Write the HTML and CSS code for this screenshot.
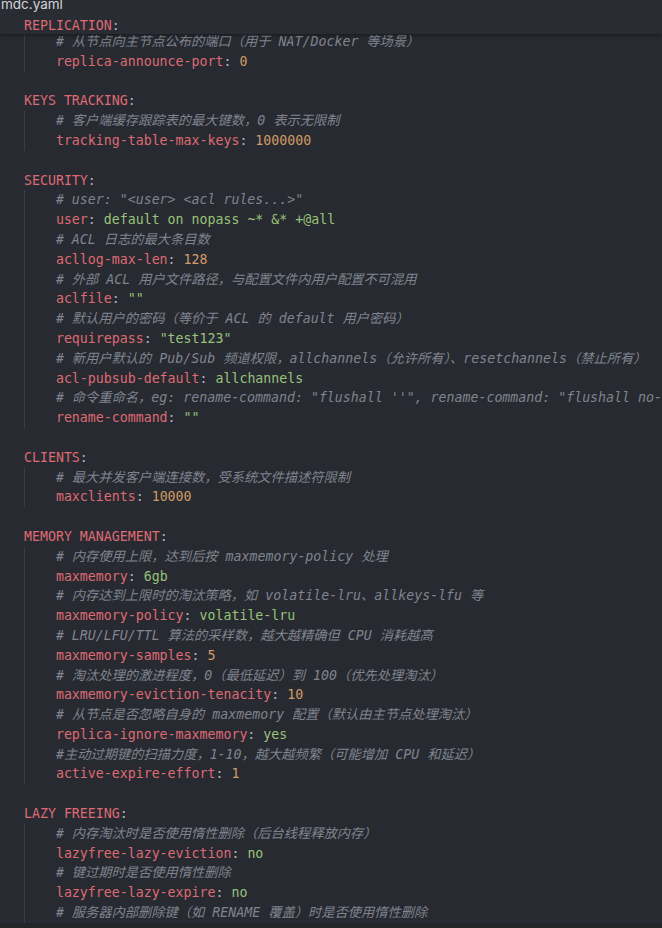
FILE: index.html
```html
<!DOCTYPE html>
<html lang="zh-CN">
<head>
<meta charset="utf-8">
<title>mdc.yaml</title>
<link rel="stylesheet" href="styles.css">
</head>
<body>
<div class="editor">
  <div class="hdr">
    <div class="fname">mdc.yaml</div>
    <div class="ln top"><span class="k">REPLICATION</span><span class="p">:</span></div>
  </div>
  <div class="code">
    <div class="body">
      <div class="ln"><span class="c"># 从节点向主节点公布的端口（用于 NAT/Docker 等场景）</span></div>
      <div class="ln"><span class="k">replica-announce-port</span><span class="p">: </span><span class="n">0</span></div>
    </div>
    <div class="ln"></div>

    <div class="ln"><span class="k">KEYS TRACKING</span><span class="p">:</span></div>
    <div class="body">
      <div class="ln"><span class="c"># 客户端缓存跟踪表的最大键数，0 表示无限制</span></div>
      <div class="ln"><span class="k">tracking-table-max-keys</span><span class="p">: </span><span class="n">1000000</span></div>
    </div>
    <div class="ln"></div>

    <div class="ln"><span class="k">SECURITY</span><span class="p">:</span></div>
    <div class="body">
      <div class="ln"><span class="c"># user: "&lt;user&gt; &lt;acl rules...&gt;"</span></div>
      <div class="ln"><span class="k">user</span><span class="p">: </span><span class="s">default on nopass ~* &amp;* +@all</span></div>
      <div class="ln"><span class="c"># ACL 日志的最大条目数</span></div>
      <div class="ln"><span class="k">acllog-max-len</span><span class="p">: </span><span class="n">128</span></div>
      <div class="ln"><span class="c"># 外部 ACL 用户文件路径，与配置文件内用户配置不可混用</span></div>
      <div class="ln"><span class="k">aclfile</span><span class="p">: </span><span class="s">""</span></div>
      <div class="ln"><span class="c"># 默认用户的密码（等价于 ACL 的 default 用户密码）</span></div>
      <div class="ln"><span class="k">requirepass</span><span class="p">: </span><span class="s">"test123"</span></div>
      <div class="ln"><span class="c"># 新用户默认的 Pub/Sub 频道权限，allchannels（允许所有）、resetchannels（禁止所有）</span></div>
      <div class="ln"><span class="k">acl-pubsub-default</span><span class="p">: </span><span class="s">allchannels</span></div>
      <div class="ln"><span class="c"># 命令重命名，eg: rename-command: "flushall ''", rename-command: "flushall no-op"</span></div>
      <div class="ln"><span class="k">rename-command</span><span class="p">: </span><span class="s">""</span></div>
    </div>
    <div class="ln"></div>

    <div class="ln"><span class="k">CLIENTS</span><span class="p">:</span></div>
    <div class="body">
      <div class="ln"><span class="c"># 最大并发客户端连接数，受系统文件描述符限制</span></div>
      <div class="ln"><span class="k">maxclients</span><span class="p">: </span><span class="n">10000</span></div>
    </div>
    <div class="ln"></div>

    <div class="ln"><span class="k">MEMORY MANAGEMENT</span><span class="p">:</span></div>
    <div class="body">
      <div class="ln"><span class="c"># 内存使用上限，达到后按 maxmemory-policy 处理</span></div>
      <div class="ln"><span class="k">maxmemory</span><span class="p">: </span><span class="s">6gb</span></div>
      <div class="ln"><span class="c"># 内存达到上限时的淘汰策略，如 volatile-lru、allkeys-lfu 等</span></div>
      <div class="ln"><span class="k">maxmemory-policy</span><span class="p">: </span><span class="s">volatile-lru</span></div>
      <div class="ln"><span class="c"># LRU/LFU/TTL 算法的采样数，越大越精确但 CPU 消耗越高</span></div>
      <div class="ln"><span class="k">maxmemory-samples</span><span class="p">: </span><span class="n">5</span></div>
      <div class="ln"><span class="c"># 淘汰处理的激进程度，0（最低延迟）到 100（优先处理淘汰）</span></div>
      <div class="ln"><span class="k">maxmemory-eviction-tenacity</span><span class="p">: </span><span class="n">10</span></div>
      <div class="ln"><span class="c"># 从节点是否忽略自身的 maxmemory 配置（默认由主节点处理淘汰）</span></div>
      <div class="ln"><span class="k">replica-ignore-maxmemory</span><span class="p">: </span><span class="s">yes</span></div>
      <div class="ln"><span class="c">#主动过期键的扫描力度，1-10，越大越频繁（可能增加 CPU 和延迟）</span></div>
      <div class="ln"><span class="k">active-expire-effort</span><span class="p">: </span><span class="n">1</span></div>
    </div>
    <div class="ln"></div>

    <div class="ln"><span class="k">LAZY FREEING</span><span class="p">:</span></div>
    <div class="body">
      <div class="ln"><span class="c"># 内存淘汰时是否使用惰性删除（后台线程释放内存）</span></div>
      <div class="ln"><span class="k">lazyfree-lazy-eviction</span><span class="p">: </span><span class="s">no</span></div>
      <div class="ln"><span class="c"># 键过期时是否使用惰性删除</span></div>
      <div class="ln"><span class="k">lazyfree-lazy-expire</span><span class="p">: </span><span class="s">no</span></div>
      <div class="ln"><span class="c"># 服务器内部删除键（如 RENAME 覆盖）时是否使用惰性删除</span></div>
      <div class="ln"><span class="k">lazyfree-lazy-server-del</span><span class="p">: </span><span class="s">no</span></div>
    </div>
  </div>
</div>
<div class="hscroll"></div>
</body>
</html>
```
FILE: styles.css
```css
html, body {
  margin: 0;
  padding: 0;
  height: 928px;
  background: #282a31;
  overflow: hidden;
}
body {
  display: flex;
  flex-direction: column;
}
.editor {
  position: relative;
  flex: 1;
  overflow: hidden;
  font-family: "DejaVu Sans Mono", "Noto Sans CJK SC", monospace;
  font-size: 13.25px;
  color: #abb2bf;
}
.hdr {
  position: absolute;
  top: 0;
  left: 0;
  right: 0;
  height: 34px;
  overflow: hidden;
  background: #2a2c33;
  box-shadow: 0 1px 4px rgba(0, 0, 0, 0.45);
  z-index: 2;
}
.fname {
  height: 15px;
  line-height: 15px;
  margin-top: -3px;
  padding-left: 1px;
  font-family: "Inter", "Noto Sans", sans-serif;
  font-size: 13.5px;
  color: #d2d4d9;
}
.hdr .ln.top {
  margin-top: 4.4px;
  padding-left: 24px;
}
.code {
  padding-top: 32px;
  padding-left: 24px;
}
.ln {
  height: 19.8px;
  line-height: 19.8px;
  white-space: pre;
}
.body {
  border-left: 1px solid #3b3e46;
  padding-left: calc(4ch - 1px);
}
.k { color: #df6a73; }
.p { color: #abb2bf; }
.n { color: #d19a66; }
.s { color: #98c379; }
.c { color: #7f848e; font-style: italic; }
.hscroll {
  height: 5px;
  flex: none;
  background: #232529;
}
```
